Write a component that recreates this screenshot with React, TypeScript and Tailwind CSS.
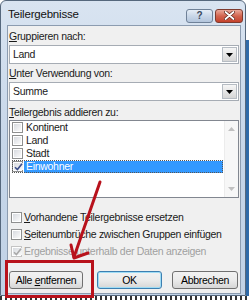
import React from 'react';

function Box({ checked, disabled }: { checked?: boolean; disabled?: boolean }) {
  return (
    <span
      className={`w-[11px] h-[11px] shrink-0 border ${
        disabled ? 'border-[#c4c4c4]' : 'border-[#8e8f8f]'
      } bg-white p-[1px] flex`}
    >
      <span className="flex-1 flex items-center justify-center bg-gradient-to-br from-[#d8dbe0] to-[#fafafa]">
        {checked && (
          <svg width="9" height="8" viewBox="0 0 9 8">
            <path
              d="M1 4.2 L3.4 6.6 L8 0.8"
              fill="none"
              stroke={disabled ? '#a9a9a9' : '#3d4f8a'}
              strokeWidth="1.6"
            />
          </svg>
        )}
      </span>
    </span>
  );
}

function Combo({ value }: { value: string }) {
  return (
    <div className="h-[19px] border border-[#a6acb4] bg-white flex items-center">
      <span className="flex-1 pl-[3px] leading-none">{value}</span>
      <span className="w-[15px] h-[15px] mr-[1px] border border-[#b6bcc3] bg-gradient-to-b from-[#f6f6f6] to-[#d6d6d6] flex items-center justify-center">
        <svg width="7" height="4" viewBox="0 0 7 4">
          <path d="M0 0h7L3.5 4z" fill="#000" />
        </svg>
      </span>
    </div>
  );
}

function Btn({ label, w, main }: { label: React.ReactNode; w: string; main?: boolean }) {
  return (
    <button
      className={`${w} h-[18px] rounded-[3px] border ${
        main ? 'border-[#3c7fb1] shadow-[inset_0_0_0_1px_#9fdcf5]' : 'border-[#707070]'
      } bg-gradient-to-b from-[#f2f2f2] via-[#ebebeb] to-[#d6d6d6] flex items-center justify-center leading-none text-[#000]`}
    >
      <span>{label}</span>
    </button>
  );
}

export default function App() {
  const items = ['Kontinent', 'Land', 'Stadt'];
  return (
    <div className="relative w-[249px] h-[300px] bg-white overflow-hidden font-['Liberation_Sans',Arial,sans-serif] text-[10.5px] tracking-[-0.3px] text-[#1a1a1a]">
      <div className="flex">
        {/* Fenster */}
        <div className="w-[246px] h-[296px] rounded-t-[6px] border border-[#56687d] bg-gradient-to-b from-[#d9e4f1] via-[#c6d6e9] to-[#c1d2e6] pl-[6px] pr-[4px] pb-[1px] flex flex-col">
          {/* Titelleiste */}
          <div className="h-[24px] flex items-center">
            <span className="flex-1 pl-[1px] pt-[4px] text-[11.5px] tracking-[-0.2px] text-[#111]">Teilergebnisse</span>
            <div className="flex gap-[2px] pt-[5px] mr-[-2px]">
              <span className="w-[27px] h-[14px] rounded-[3px] border border-[#6f8198] bg-gradient-to-b from-[#e6eef7] via-[#c9d7e8] to-[#b3c5dc] flex items-center justify-center text-[10px] font-bold text-[#3b4a5e] leading-none">
                ?
              </span>
              <span className="w-[28px] h-[14px] rounded-[3px] border border-[#7d3a2e] bg-gradient-to-b from-[#e9a89a] via-[#d2644f] to-[#c4412b] flex items-center justify-center">
                <svg width="11" height="9" viewBox="0 0 11 9">
                  <path d="M1.5 1 L9.5 8 M9.5 1 L1.5 8" stroke="#5a2218" strokeWidth="3.2" strokeLinecap="round" />
                  <path d="M1.5 1 L9.5 8 M9.5 1 L1.5 8" stroke="#fff" strokeWidth="1.8" strokeLinecap="round" />
                </svg>
              </span>
            </div>
          </div>

          {/* Inhalt */}
          <div className="flex-1 border border-[#8c9cb0] bg-[#f0f0f0] px-[1px] flex flex-col">
            <div className="h-[13px] mt-[4px] leading-[13px]">
              <u>G</u>ruppieren nach:
            </div>
            <div className="mt-[2px]">
              <Combo value="Land" />
            </div>
            <div className="h-[13px] mt-[3px] leading-[13px]">
              <u>U</u>nter Verwendung von:
            </div>
            <div className="mt-[2px]">
              <Combo value="Summe" />
            </div>
            <div className="h-[13px] mt-[5px] leading-[13px]">
              <u>T</u>eilergebnis addieren zu:
            </div>
            <div className="mt-[1px] h-[78px] border border-[#828790] bg-white flex">
              <div className="flex-1 pl-[2px] pr-[1px]">
                {items.map((t) => (
                  <div key={t} className="h-[13px] flex items-center">
                    <Box />
                    <span className="pl-[3px] leading-none">{t}</span>
                  </div>
                ))}
                <div className="h-[13px] flex items-center outline outline-1 outline-dotted outline-[#555] -outline-offset-1">
                  <Box checked />
                  <span className="flex-1 h-[12px] ml-[1px] pl-[2px] bg-[#3399ff] text-white flex items-center leading-none">
                    Einwohner
                  </span>
                </div>
              </div>
              <div className="w-[14px] bg-[#f7f7f7] border-l border-[#ececec] flex flex-col justify-between items-center py-[6px]">
                <svg width="7" height="4" viewBox="0 0 7 4">
                  <path d="M0 4h7L3.5 0z" fill="#c0c0c0" />
                </svg>
                <svg width="7" height="4" viewBox="0 0 7 4">
                  <path d="M0 0h7L3.5 4z" fill="#c0c0c0" />
                </svg>
              </div>
            </div>

            <div className="mt-[11px] pl-[2px] flex flex-col">
              <div className="h-[17px] flex items-center gap-[2px]">
                <Box />
                <span className="leading-none whitespace-nowrap">
                  <u>V</u>orhandene Teilergebnisse ersetzen
                </span>
              </div>
              <div className="h-[17px] flex items-center gap-[2px]">
                <Box />
                <span className="leading-none whitespace-nowrap">
                  <u>S</u>eitenumbrüche zwischen Gruppen einfügen
                </span>
              </div>
              <div className="h-[17px] flex items-center gap-[2px] text-[#a0a0a0]">
                <Box checked disabled />
                <span className="leading-none whitespace-nowrap">Ergebnisse unterhalb der Daten anzeigen</span>
              </div>
            </div>

            <div className="mt-[11px] flex">
              <Btn w="w-[74px]" label={<>Alle <u>e</u>ntfernen</>} />
              <span className="w-[14px]" />
              <Btn w="w-[65px]" label="OK" main />
              <span className="w-[10px]" />
              <Btn w="w-[66px]" label="Abbrechen" />
            </div>
          </div>
        </div>
        <div className="w-[3px] h-[296px] pt-[40px]">
          <div className="h-full bg-[#2f6aa8]" />
        </div>
      </div>
      <div className="h-[4px] bg-[repeating-linear-gradient(90deg,#333_0_2px,#fff_2px_5px)]" />

      {/* Markierung */}
      <div className="absolute left-[5px] top-[260px] w-[89px] h-[38px] border-[3px] border-[#b8121c]" />
      <svg className="absolute left-0 top-0" width="249" height="300" viewBox="0 0 249 300">
        <path d="M100 182 L74 257" stroke="#b8121c" strokeWidth="3" strokeLinecap="round" fill="none" />
        <path d="M71 245 L74 258 L88 253" stroke="#b8121c" strokeWidth="3" strokeLinecap="round" strokeLinejoin="round" fill="none" />
      </svg>
    </div>
  );
}
